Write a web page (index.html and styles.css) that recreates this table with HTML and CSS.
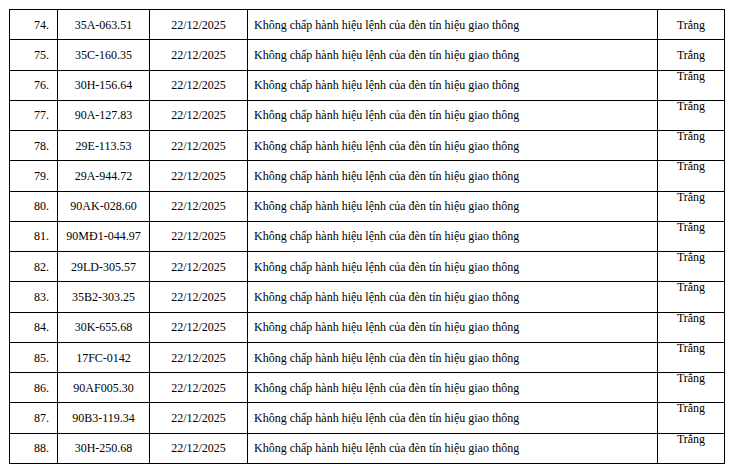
FILE: index.html
```html
<!DOCTYPE html>
<html lang="vi">
<head>
<meta charset="utf-8">
<title>Danh sách vi phạm</title>
<link rel="stylesheet" href="styles.css">
</head>
<body>
<table class="list">
  <colgroup>
    <col class="c-no"><col class="c-plate"><col class="c-date"><col class="c-desc"><col class="c-color">
  </colgroup>
  <tbody>
    <tr><td class="no">74.</td><td class="ctr">35A-063.51</td><td class="ctr">22/12/2025</td><td class="desc">Không chấp hành hiệu lệnh của đèn tín hiệu giao thông</td><td class="ctr">Trắng</td></tr>
    <tr><td class="no">75.</td><td class="ctr">35C-160.35</td><td class="ctr">22/12/2025</td><td class="desc">Không chấp hành hiệu lệnh của đèn tín hiệu giao thông</td><td class="ctr">Trắng</td></tr>
    <tr><td class="no">76.</td><td class="ctr">30H-156.64</td><td class="ctr">22/12/2025</td><td class="desc">Không chấp hành hiệu lệnh của đèn tín hiệu giao thông</td><td class="top"><div class="clip">Trắng</div></td></tr>
    <tr><td class="no">77.</td><td class="ctr">90A-127.83</td><td class="ctr">22/12/2025</td><td class="desc">Không chấp hành hiệu lệnh của đèn tín hiệu giao thông</td><td class="top"><div class="clip">Trắng</div></td></tr>
    <tr><td class="no">78.</td><td class="ctr">29E-113.53</td><td class="ctr">22/12/2025</td><td class="desc">Không chấp hành hiệu lệnh của đèn tín hiệu giao thông</td><td class="top"><div class="clip">Trắng</div></td></tr>
    <tr><td class="no">79.</td><td class="ctr">29A-944.72</td><td class="ctr">22/12/2025</td><td class="desc">Không chấp hành hiệu lệnh của đèn tín hiệu giao thông</td><td class="top"><div class="clip">Trắng</div></td></tr>
    <tr><td class="no">80.</td><td class="ctr">90AK-028.60</td><td class="ctr">22/12/2025</td><td class="desc">Không chấp hành hiệu lệnh của đèn tín hiệu giao thông</td><td class="top"><div class="clip">Trắng</div></td></tr>
    <tr><td class="no">81.</td><td class="ctr">90MĐ1-044.97</td><td class="ctr">22/12/2025</td><td class="desc">Không chấp hành hiệu lệnh của đèn tín hiệu giao thông</td><td class="top"><div class="clip">Trắng</div></td></tr>
    <tr><td class="no">82.</td><td class="ctr">29LD-305.57</td><td class="ctr">22/12/2025</td><td class="desc">Không chấp hành hiệu lệnh của đèn tín hiệu giao thông</td><td class="top"><div class="clip">Trắng</div></td></tr>
    <tr><td class="no">83.</td><td class="ctr">35B2-303.25</td><td class="ctr">22/12/2025</td><td class="desc">Không chấp hành hiệu lệnh của đèn tín hiệu giao thông</td><td class="top"><div class="clip">Trắng</div></td></tr>
    <tr><td class="no">84.</td><td class="ctr">30K-655.68</td><td class="ctr">22/12/2025</td><td class="desc">Không chấp hành hiệu lệnh của đèn tín hiệu giao thông</td><td class="top"><div class="clip">Trắng</div></td></tr>
    <tr><td class="no">85.</td><td class="ctr">17FC-0142</td><td class="ctr">22/12/2025</td><td class="desc">Không chấp hành hiệu lệnh của đèn tín hiệu giao thông</td><td class="top"><div class="clip">Trắng</div></td></tr>
    <tr><td class="no">86.</td><td class="ctr">90AF005.30</td><td class="ctr">22/12/2025</td><td class="desc">Không chấp hành hiệu lệnh của đèn tín hiệu giao thông</td><td class="top"><div class="clip">Trắng</div></td></tr>
    <tr><td class="no">87.</td><td class="ctr">90B3-119.34</td><td class="ctr">22/12/2025</td><td class="desc">Không chấp hành hiệu lệnh của đèn tín hiệu giao thông</td><td class="top"><div class="clip">Trắng</div></td></tr>
    <tr><td class="no">88.</td><td class="ctr">30H-250.68</td><td class="ctr">22/12/2025</td><td class="desc">Không chấp hành hiệu lệnh của đèn tín hiệu giao thông</td><td class="top"><div class="clip">Trắng</div></td></tr>
  </tbody>
</table>
</body>
</html>
```

FILE: styles.css
```css
html, body {
  margin: 0;
  padding: 0;
  background: #fff;
}
body {
  padding: 9px 0 0 9px;
  font-family: "Liberation Serif", "Times New Roman", serif;
  font-size: 12px;
  color: #000;
}
.list {
  border-collapse: collapse;
  table-layout: fixed;
  width: 715px;
}
.c-no { width: 48px; }
.c-plate { width: 92px; }
.c-date { width: 98px; }
.c-desc { width: 410px; }
.c-color { width: 67px; }
.list td {
  border: 1px solid #000;
  height: 29.27px;
  padding: 0;
  vertical-align: middle;
  white-space: nowrap;
  line-height: 14px;
}
.list td.no {
  text-align: right;
  padding-right: 8px;
}
.list td.ctr {
  text-align: center;
}
.list td.desc {
  padding-left: 6px;
}
.list td.top {
  vertical-align: top;
  text-align: center;
}
.clip {
  height: 28px;
  overflow: hidden;
  line-height: 11px;
}
```
